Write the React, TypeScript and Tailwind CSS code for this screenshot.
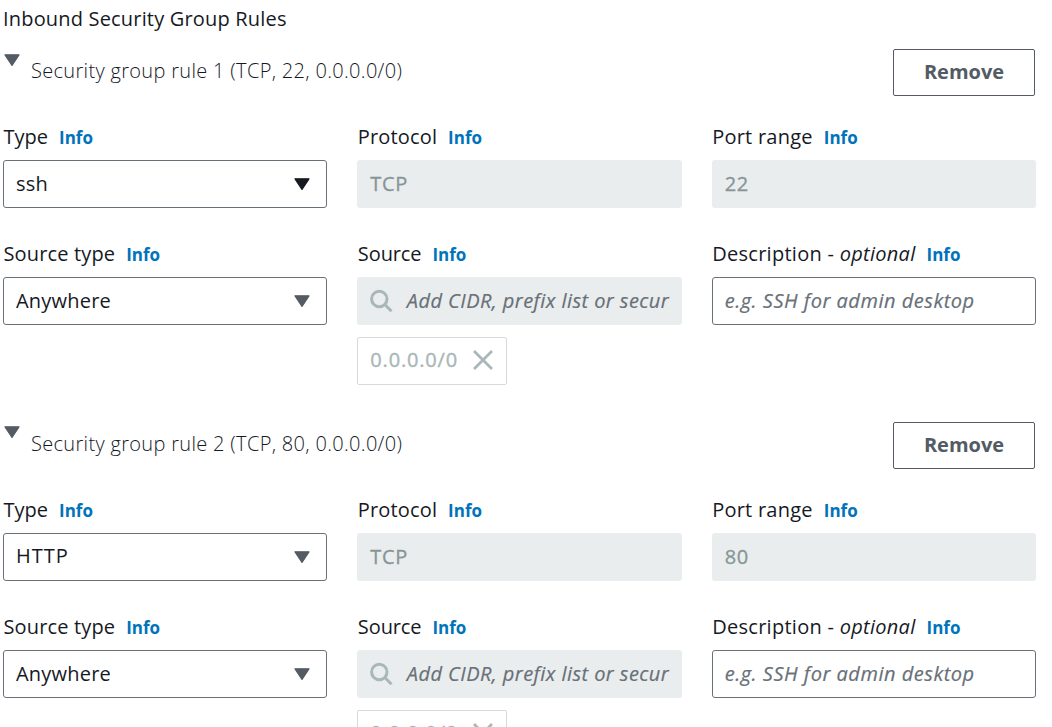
import type { ReactNode } from "react";

type Rule = { id: number; type: ReactNode; port: string; active?: boolean };

const rules: Rule[] = [
  { id: 1, type: "ssh", port: "22", active: true },
  { id: 2, type: <span className="relative -top-px tracking-[1px]">HTTP</span>, port: "80" },
];

function Caret({ className }: { className: string }) {
  return (
    <svg viewBox="0 0 16 12" className={`h-3 w-4 shrink-0 ${className}`}>
      <path d="M1 0.8H15L8 11.4Z" fill="currentColor" stroke="currentColor" strokeWidth="1.2" strokeLinejoin="round" />
    </svg>
  );
}

function Label({ children, className = "" }: { children: ReactNode; className?: string }) {
  return (
    <div className="flex h-[46px] items-center gap-[11px] pl-[0.5px] leading-[26px] whitespace-nowrap">
      <span className={className}>{children}</span>
      <a className="pt-px text-[17px] font-bold text-[#0073bb]">Info</a>
    </div>
  );
}

const boxBase = "flex h-12 items-center rounded-[3px] whitespace-nowrap overflow-hidden px-3 ";

function SelectBox({ value, active }: { value: ReactNode; active?: boolean }) {
  return (
    <div className={boxBase + "justify-between border border-[#687078] pr-4 tracking-[0.2px]"}>
      <span className="-mt-px">{value}</span>
      <Caret className={active ? "text-[#16191f]" : "text-[#545b64]"} />
    </div>
  );
}

function Disabled({ value }: { value: string }) {
  return (
    <div className={boxBase + "bg-[#eaeded] pl-[13px] tracking-[0.6px] text-[#879596] [-webkit-text-stroke:0.3px_#879596]"}>
      {value}
    </div>
  );
}

function RuleGroup({ rule }: { rule: Rule }) {
  return (
    <section className="h-[373px]">
      <div className="flex h-[65px] items-start">
        <Caret className={rule.id === 1 ? "mt-[5px] ml-px text-[#545b64]" : "mt-1 ml-px text-[#545b64]"} />
        <div className="ml-[11px] flex-1 pt-[9px] font-light leading-[26px] tracking-[0.32px] text-[#16191f]">
          Security group rule {rule.id} (TCP, {rule.port}, 0.0.0.0/0)
        </div>
        <button className="mr-px h-[47px] w-[142px] rounded-[2px] border border-[#545b64] pb-[2px] font-bold text-[#545b64]">
          Remove
        </button>
      </div>
      <div className="grid grid-cols-3 gap-x-[30px] gap-y-[23px]">
        <div>
          <Label>Type</Label>
          <SelectBox value={rule.type} active={rule.active} />
        </div>
        <div>
          <Label className="tracking-[0.15px]">Protocol</Label>
          <Disabled value="TCP" />
        </div>
        <div>
          <Label className="tracking-[0.24px]">Port range</Label>
          <Disabled value={rule.port} />
        </div>
        <div>
          <Label className="tracking-[0.15px]">Source type</Label>
          <SelectBox value="Anywhere" />
        </div>
        <div>
          <Label className="tracking-[-0.1px]">Source</Label>
          <div className={boxBase + "bg-[#eaeded] pl-[13px] italic text-[#687078]"}>
            <svg viewBox="0 0 24 24" className="mr-[12.5px] size-6 shrink-0" fill="none" stroke="#aab7b8" strokeWidth="3">
              <circle cx="9.3" cy="10" r="7.7" />
              <path d="M14.8 15.5L21.5 22.2" />
            </svg>
            <span className="tracking-[0.44px] [-webkit-text-stroke:0.2px_#687078]">Add CIDR, prefix list or secur</span>
          </div>
          <div className="mt-3 flex h-12 w-[150px] items-center justify-between rounded-[2px] border border-[#d5dbdb] px-3 pb-[2px] text-[#aab7b8]">
            <span className="leading-[26px] tracking-[0.82px] [-webkit-text-stroke:0.4px_#aab7b8]">0.0.0.0/0</span>
            <svg viewBox="0 0 22 22" className="size-[22px]" fill="none" stroke="currentColor" strokeWidth="2.8">
              <path d="M2 2L20 20M20 2L2 20" />
            </svg>
          </div>
        </div>
        <div>
          <Label className="tracking-[0.28px]">
            Description - <i>optional</i>
          </Label>
          <div
            className={
              boxBase +
              "border border-[#687078] tracking-[0.52px] italic text-[#687078] [-webkit-text-stroke:0.2px_#687078]"
            }
          >
            e.g. SSH for admin desktop
          </div>
        </div>
      </div>
    </section>
  );
}

export default function App() {
  return (
    <main className="h-[727px] overflow-hidden bg-white pr-4 pl-[3px] font-['Open_Sans',sans-serif] text-[20px] text-[#16191f]">
      <h2 className="h-[49px] pt-[6px] leading-[26px] tracking-[0.18px]">Inbound Security Group Rules</h2>
      {rules.map((rule) => (
        <RuleGroup key={rule.id} rule={rule} />
      ))}
    </main>
  );
}
